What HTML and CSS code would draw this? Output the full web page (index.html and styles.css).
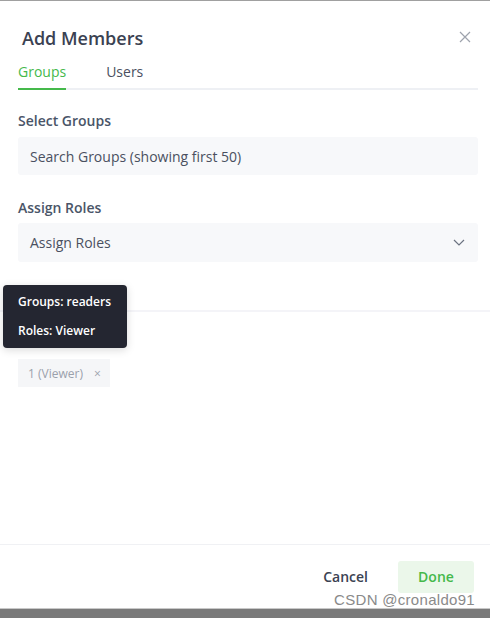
FILE: index.html
```html
<!DOCTYPE html>
<html>
<head>
<meta charset="utf-8">
<link rel="stylesheet" href="styles.css">
</head>
<body>
<div class="screen">
  <div class="modal">
    <div class="header">
      <h1 class="title">Add Members</h1>
      <button class="close" aria-label="Close">
        <svg width="12" height="12" viewBox="0 0 12 12"><path d="M1 1L11 11M11 1L1 11" stroke="#9ea3ad" stroke-width="1.2" fill="none"/></svg>
      </button>
    </div>
    <div class="tabs">
      <div class="tab active">Groups</div>
      <div class="tab">Users</div>
    </div>
    <div class="form">
      <div class="label">Select Groups</div>
      <div class="field">Search Groups (showing first 50)</div>
      <div class="label second">Assign Roles</div>
      <div class="field select">
        <span>Assign Roles</span>
        <svg width="12" height="7" viewBox="0 0 12 7"><path d="M1 1L6 6L11 1" stroke="#6b7280" stroke-width="1.2" fill="none"/></svg>
      </div>
    </div>
    <div class="divider"></div>
    <div class="selected">
      <div class="tag">1 (Viewer) <span class="tag-x">×</span></div>
    </div>
    <div class="footer">
      <button class="btn cancel">Cancel</button>
      <button class="btn done">Done</button>
    </div>
    <div class="tooltip">
      <div>Groups: readers</div>
      <div>Roles: Viewer</div>
    </div>
  </div>
  <div class="bottombar"></div>
  <div class="watermark">CSDN @cronaldo91</div>
</div>
</body>
</html>
```
FILE: styles.css
```css
* { box-sizing: border-box; }
html, body { margin: 0; padding: 0; background: #fff; }
body { font-family: "Open Sans", "Noto Sans", sans-serif; width: 490px; height: 618px; overflow: hidden; }
.screen { position: relative; width: 490px; height: 618px; display: flex; flex-direction: column; }
.modal {
  position: relative;
  flex: 1;
  display: flex;
  flex-direction: column;
  border-top: 1px solid #a0a0a0;
  background: #fff;
}
.header { display: flex; justify-content: space-between; align-items: flex-start; padding: 25px 19px 0 22px; }
.title { margin: 0; font-size: 18px; line-height: 24px; font-weight: 600; color: #3b4252; }
.close { border: 0; background: none; padding: 0; margin-top: 5px; width: 12px; height: 12px; display: flex; }
.tabs { display: flex; margin: 12px 12px 0 18px; border-bottom: 2px solid #eef0f4; gap: 40px; }
.tab { font-size: 14px; line-height: 20px; color: #4a5060; padding-bottom: 6px; }
.tab.active { color: #45b94b; border-bottom: 2px solid #45b94b; margin-bottom: -2px; }
.form { padding: 21px 12px 0 18px; display: flex; flex-direction: column; }
.label { font-size: 14px; line-height: 20px; font-weight: 600; color: #4a5568; }
.label.second { margin-top: 23px; }
.field {
  margin-top: 6px;
  height: 38px;
  background: #f7f8fa;
  border-radius: 3px;
  padding: 0 12px;
  display: flex;
  align-items: center;
  font-size: 14px;
  color: #4a5060;
}
.field.select { margin-top: 5px; height: 39px; justify-content: space-between; }
.field.select svg { margin-right: 1px; }
.divider { margin-top: 48px; height: 2px; background: #f4f4f8; }
.selected { padding: 47px 18px 0; display: flex; }
.tag {
  height: 28px;
  background: #f5f6f8;
  padding: 0 9px 0 10px;
  display: flex;
  align-items: center;
  gap: 11px;
  font-size: 12px;
  color: #9ba1ac;
}
.tag-x { font-size: 12px; color: #9ba1ac; }
.footer {
  margin-top: auto;
  border-top: 1px solid #f0f1f4;
  height: 64px;
  display: flex;
  justify-content: flex-end;
  align-items: center;
  padding: 0 16px 0 0;
  gap: 30px;
}
.btn { border: 0; font-family: inherit; font-size: 14px; font-weight: 600; cursor: pointer; }
.cancel { background: none; color: #3b4252; padding: 0; }
.done { background: #ebf7ea; color: #45b94b; width: 76px; height: 32px; border-radius: 3px; }
.tooltip {
  position: absolute;
  left: 3px;
  top: 284px;
  width: 124px;
  height: 63px;
  background: #242631;
  border-radius: 4px;
  padding: 2px 0 0 15px;
  color: #fff;
  font-size: 12px;
  font-weight: 600;
  line-height: 29px;
  box-shadow: 0 2px 8px rgba(0,0,0,0.15);
}
.bottombar { height: 10px; background: #7a7a7a; border-top: 1px solid #c8c8c8; }
.watermark {
  position: absolute;
  right: 15px;
  top: 591px;
  font-family: "Liberation Sans", Arial, sans-serif;
  font-size: 15px;
  color: #8a8a8a;
  letter-spacing: 0.3px;
}
```
